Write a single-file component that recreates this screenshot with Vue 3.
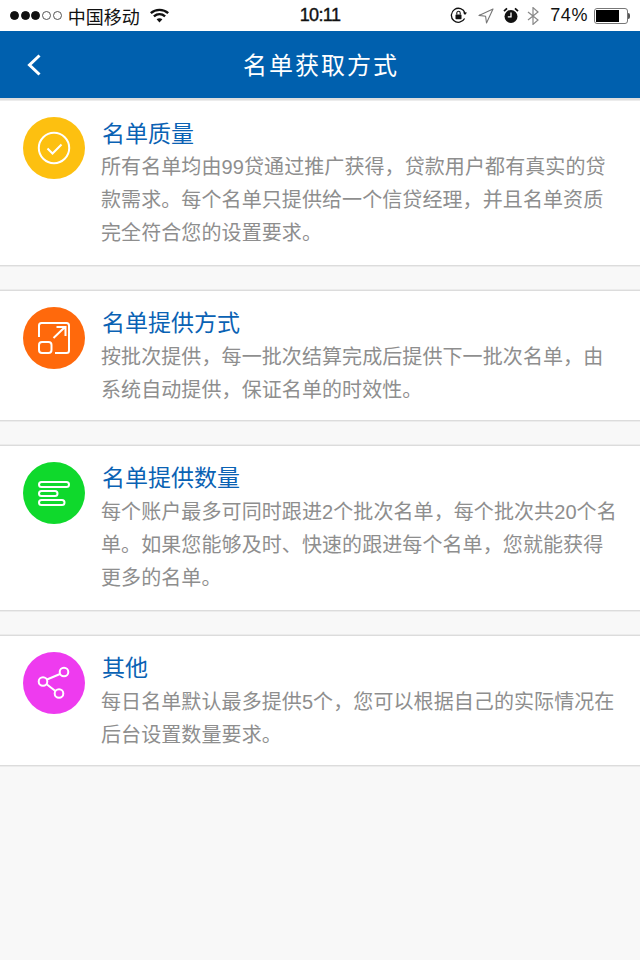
<template>
  <div class="page">
    <div class="status-bar">
      <div class="status-left">
        <span class="signal">
          <i class="on"></i><i class="on"></i><i class="on"></i><i></i><i></i>
        </span>
        <span class="carrier">中国移动</span>
        <svg class="wifi" width="19" height="15" viewBox="0 0 19 15">
          <path d="M.8 5.2C5.6.8 13.4.8 18.2 5.2" fill="none" stroke="#111" stroke-width="2.4" />
          <path d="M3.9 8.4C7.2 5.5 11.8 5.5 15.1 8.4" fill="none" stroke="#111" stroke-width="2.4" />
          <path d="M6.6 11.2C8.3 9.8 10.7 9.8 12.4 11.2L9.5 14.4Z" fill="#111" />
        </svg>
      </div>
      <div class="time">10:11</div>
      <div class="status-right">
        <svg width="17" height="17" viewBox="0 0 17 17">
          <path d="M14.6 11.5A7 7 0 1 1 15 6" fill="none" stroke="#111" stroke-width="1.3" />
          <path d="M13 5.5h4l-2 2.4Z" fill="#111" />
          <rect x="5.5" y="7.4" width="6" height="4.8" rx=".6" fill="#111" />
          <path d="M6.8 7.5V6a1.7 1.7 0 0 1 3.4 0v1.5" fill="none" stroke="#111" stroke-width="1.1" />
        </svg>
        <svg class="arrow" width="16" height="16" viewBox="0 0 16 16">
          <path d="M15 1 1 7.4l6.6.9.9 6.7Z" fill="none" stroke="#777" stroke-width="1.1" stroke-linejoin="round" />
        </svg>
        <svg class="alarm" width="16" height="17" viewBox="0 0 16 17">
          <circle cx="8" cy="9.5" r="6.5" fill="#111" />
          <path d="M1 4.2 4 1.4M15 4.2 12 1.4" stroke="#111" stroke-width="1.8" />
          <path d="M8 5.5v4.3H4.8" fill="none" stroke="#fff" stroke-width="1.3" />
        </svg>
        <svg class="bluetooth" width="12" height="18" viewBox="0 0 12 18">
          <path d="M1 5l10 8-5 4.4V.6L11 5 1 13" fill="none" stroke="#888" stroke-width="1.2" />
        </svg>
        <span class="percent">74%</span>
        <span class="battery"><span class="battery-fill"></span></span>
        <span class="battery-tip"></span>
      </div>
    </div>

    <div class="nav-bar">
      <svg class="back" width="16" height="24" viewBox="0 0 16 24">
        <path d="M13.5 2.5 3.5 12l10 9.5" fill="none" stroke="#fff" stroke-width="3" />
      </svg>
      <div class="nav-title">名单获取方式</div>
    </div>
    <div class="nav-shadow"></div>

    <div class="list">
      <div v-for="item in items" :key="item.title" class="card" :class="{ long: item.lines.length === 3 }">
        <div class="icon" :style="{ background: item.color }">
          <svg width="62" height="62" viewBox="0 0 62 62" fill="none" stroke="#fff" stroke-width="2">
            <template v-if="item.icon === 'check'">
              <circle cx="31" cy="31" r="15.2" />
              <path d="M24.5 31.5 29.5 36.5 38.5 27.5" />
            </template>
            <template v-else-if="item.icon === 'expand'">
              <path d="M16 30V18.5a2.5 2.5 0 0 1 2.5-2.5h25a2.5 2.5 0 0 1 2.5 2.5v25a2.5 2.5 0 0 1-2.5 2.5H32" />
              <rect x="16" y="35" width="12.5" height="11" rx="3" />
              <path d="M30.5 31 42 20M33.5 20h9v9" />
            </template>
            <template v-else-if="item.icon === 'lines'">
              <rect x="16" y="20" width="30" height="5" rx="2.5" />
              <rect x="16" y="29" width="18.5" height="5" rx="2.5" />
              <rect x="16" y="38" width="25.5" height="5" rx="2.5" />
            </template>
            <template v-else>
              <path d="M24 27.5 37 22M24 32.5 33 39.5" />
              <circle cx="20" cy="29.5" r="4.3" />
              <circle cx="41" cy="20" r="4.3" />
              <circle cx="36" cy="41.5" r="4.3" />
            </template>
          </svg>
        </div>
        <div class="body">
          <div class="title">{{ item.title }}</div>
          <div class="desc">
            <div v-for="line in item.lines" :key="line">{{ line }}</div>
          </div>
        </div>
      </div>
    </div>
  </div>
</template>

<script setup>
const items = [
  {
    title: '名单质量',
    color: '#fdc010',
    icon: 'check',
    lines: [
      '所有名单均由99贷通过推广获得，贷款用户都有真实的贷',
      '款需求。每个名单只提供给一个信贷经理，并且名单资质',
      '完全符合您的设置要求。'
    ]
  },
  {
    title: '名单提供方式',
    color: '#ff690c',
    icon: 'expand',
    lines: [
      '按批次提供，每一批次结算完成后提供下一批次名单，由',
      '系统自动提供，保证名单的时效性。'
    ]
  },
  {
    title: '名单提供数量',
    color: '#0fd92c',
    icon: 'lines',
    lines: [
      '每个账户最多可同时跟进2个批次名单，每个批次共20个名',
      '单。如果您能够及时、快速的跟进每个名单，您就能获得',
      '更多的名单。'
    ]
  },
  {
    title: '其他',
    color: '#ee3bef',
    icon: 'share',
    lines: [
      '每日名单默认最多提供5个，您可以根据自己的实际情况在',
      '后台设置数量要求。'
    ]
  }
]
</script>

<style>
body {
  background: #f8f8f8;
}
</style>

<style scoped>
.page {
  width: 640px;
  height: 960px;
  overflow: hidden;
  background: #f8f8f8;
  font-family: "Liberation Sans", "Noto Sans CJK SC", sans-serif;
}

.status-bar {
  height: 31px;
  display: grid;
  grid-template-columns: 1fr auto 1fr;
  align-items: center;
  padding: 0 10px;
  box-sizing: border-box;
  background: #fff;
  color: #111;
}

.status-left,
.status-right {
  display: flex;
  align-items: center;
}

.status-right {
  justify-content: flex-end;
}

.signal {
  display: flex;
  gap: 1.7px;
}

.signal i {
  width: 9px;
  height: 9px;
  box-sizing: border-box;
  border: 1px solid #555;
  border-radius: 50%;
}

.signal i.on {
  background: #111;
  border-color: #111;
}

.carrier {
  margin-left: 6px;
  font-size: 18px;
}

.wifi {
  margin-left: 10px;
}

.time {
  font-size: 18px;
  letter-spacing: -0.6px;
  -webkit-text-stroke: 0.4px #111;
}

.arrow {
  margin-left: 11px;
}

.alarm {
  margin-left: 9px;
}

.bluetooth {
  margin-left: 8px;
}

.percent {
  margin-left: 11px;
  font-size: 18px;
  letter-spacing: 0.6px;
}

.battery {
  width: 34px;
  height: 16px;
  margin-left: 6px;
  padding: 1px;
  box-sizing: border-box;
  border: 1px solid #777;
  border-radius: 3px;
  display: block;
}

.battery-fill {
  display: block;
  width: 78%;
  height: 100%;
  background: #000;
}

.battery-tip {
  width: 2px;
  height: 6px;
  background: #555;
  border-radius: 0 2px 2px 0;
}

.nav-bar {
  height: 67px;
  position: relative;
  display: flex;
  align-items: center;
  justify-content: center;
  background: #0060ae;
}

.back {
  position: absolute;
  left: 26px;
  top: 22px;
}

.nav-title {
  margin: -2px 0 0 2px;
  color: #fff;
  font-size: 24px;
  letter-spacing: 2px;
}

.nav-shadow {
  height: 3px;
  background: #dedede;
}

.list {
  display: flex;
  flex-direction: column;
  gap: 24px;
}

.card {
  display: flex;
  align-items: flex-start;
  padding: 16px 20px 13px 23px;
  background: #fff;
  border-top: 1px solid #dcdcdc;
  border-bottom: 1px solid #dcdcdc;
  box-shadow: 0 1px 0 #ececec, 0 -1px 0 #ececec;
}

.card.long {
  padding-bottom: 15px;
}

.card:first-child {
  border-top: none;
}

.card:first-child .title {
  margin: 1px 0;
}

.icon {
  flex: none;
  width: 62px;
  height: 62px;
  border-radius: 50%;
}

.icon svg {
  display: block;
}

.body {
  margin-left: 16px;
  min-width: 0;
}

.title {
  margin-bottom: 2px;
  padding-left: 1px;
  font-size: 23px;
  line-height: 32px;
  color: #0a62b4;
}

.desc {
  font-size: 20px;
  line-height: 33px;
  letter-spacing: 0.09px;
  color: #8e8e8e;
  white-space: nowrap;
}
</style>
